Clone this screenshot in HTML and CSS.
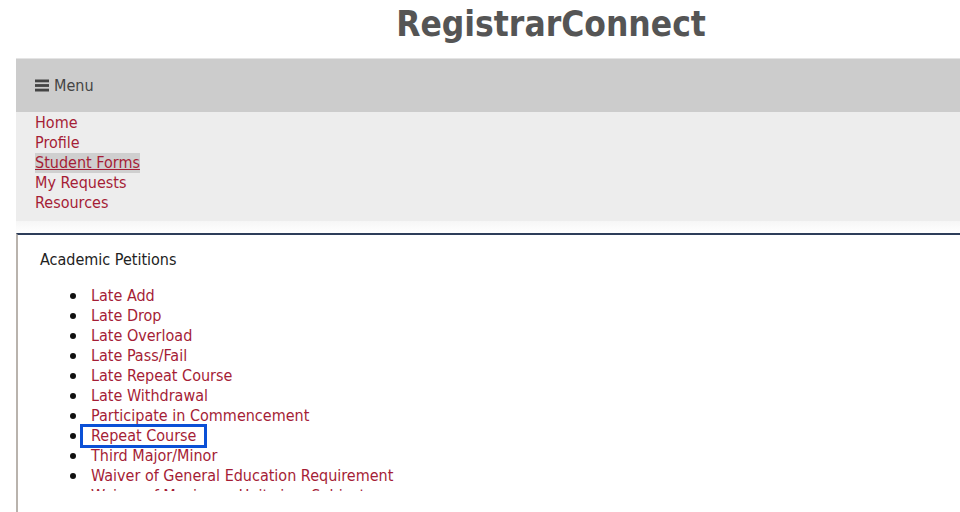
FILE: index.html
```html
<!DOCTYPE html>
<html lang="en">
<head>
<meta charset="utf-8">
<title>RegistrarConnect</title>
<link rel="stylesheet" href="styles.css">
</head>
<body>
<div class="page">
  <header class="site-header">
    <h1 class="site-title">RegistrarConnect</h1>
  </header>
  <div class="menu-bar">
    <span class="menu-toggle">
      <svg class="hamburger" width="14" height="13" viewBox="0 0 14 13" aria-hidden="true">
        <rect x="0" y="0.5" width="14" height="2.8" fill="#444"/>
        <rect x="0" y="5.1" width="14" height="2.8" fill="#444"/>
        <rect x="0" y="9.7" width="14" height="2.8" fill="#444"/>
      </svg>
      Menu
    </span>
  </div>
  <nav class="main-nav">
    <a href="#">Home</a>
    <a href="#">Profile</a>
    <a href="#" class="active">Student Forms</a>
    <a href="#">My Requests</a>
    <a href="#">Resources</a>
  </nav>
  <div class="spacer"></div>
  <section class="content-box">
    <h2 class="section-heading">Academic Petitions</h2>
    <div class="list-clip">
      <ul class="form-list">
        <li><a href="#">Late Add</a></li>
        <li><a href="#">Late Drop</a></li>
        <li><a href="#">Late Overload</a></li>
        <li><a href="#">Late Pass/Fail</a></li>
        <li><a href="#">Late Repeat Course</a></li>
        <li><a href="#">Late Withdrawal</a></li>
        <li><a href="#">Participate in Commencement</a></li>
        <li><a href="#" class="focused">Repeat Course</a></li>
        <li><a href="#">Third Major/Minor</a></li>
        <li><a href="#">Waiver of General Education Requirement</a></li>
        <li><a href="#">Waiver of Maximum Units in a Subject</a></li>
      </ul>
    </div>
  </section>
</div>
</body>
</html>
```
FILE: styles.css
```css
html, body {
  margin: 0;
  padding: 0;
  overflow: hidden;
  background: #fff;
}
body {
  font-family: "DejaVu Sans Condensed", "DejaVu Sans", sans-serif;
  font-size: 16px;
  line-height: 20px;
  width: 960px;
  height: 512px;
}
.page {
  margin-left: 16px;
  width: 1070px;
}
.site-header {
  height: 58px;
  text-align: center;
}
.site-title {
  margin: 0;
  padding-top: 3px;
  font-family: "DejaVu Sans Condensed", "DejaVu Sans", sans-serif;
  font-weight: bold;
  font-size: 35px;
  line-height: 42px;
  color: #555;
}
.menu-bar {
  height: 54px;
  border-top: 1px solid #e4e4e4;
  background: #cccccc;
  display: flex;
  align-items: center;
  padding-left: 19px;
  box-sizing: border-box;
}
.menu-toggle {
  display: flex;
  align-items: center;
  gap: 5px;
  color: #444;
  font-size: 16px;
}
.main-nav {
  background: #ededed;
  padding: 1px 0 8px 19px;
  display: flex;
  flex-direction: column;
  align-items: flex-start;
}
.main-nav a {
  color: #a51d36;
  text-decoration: none;
}
.main-nav a.active {
  background: #cfcfcf;
  text-decoration: underline;
}
.spacer {
  height: 12px;
  background: linear-gradient(#f6f6f6, #ffffff);
}
.content-box {
  border-top: 2px solid #2d3d5a;
  border-left: 2px solid #b9b3ad;
  height: 300px;
  padding: 15px 0 0 22px;
  box-sizing: border-box;
}
.section-heading {
  margin: 0;
  font-weight: normal;
  font-size: 16px;
  line-height: 20px;
  color: #222;
}
.list-clip {
  margin-top: 16px;
  height: 205px;
  overflow: hidden;
}
.form-list {
  margin: 0;
  padding-left: 51px;
  list-style: none;
}
.form-list li {
  line-height: 20px;
}
.form-list li::before {
  content: "";
  display: inline-block;
  width: 6px;
  height: 6px;
  border-radius: 50%;
  background: #111;
  margin-left: -21px;
  margin-right: 15px;
  vertical-align: 2px;
}
.form-list a {
  color: #a51d36;
  text-decoration: none;
}
.form-list a.focused {
  display: inline-block;
  line-height: 18px;
  padding: 0 8px;
  margin: 0 -8px;
  outline: 3px solid #0b50d6;
}
```
